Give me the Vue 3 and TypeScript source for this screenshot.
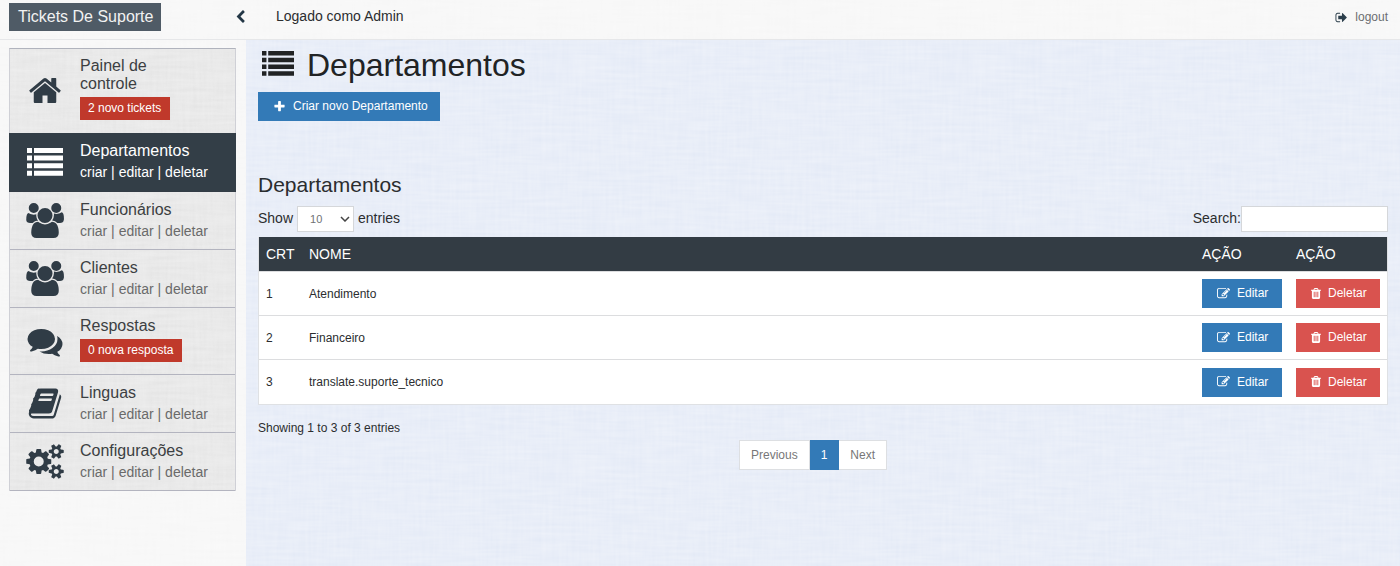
<script setup lang="ts">
import { ref } from 'vue'

interface Icon {
  viewBox: string
  path: string
}

interface MenuItem {
  title: string
  icon: string
  badge?: string
  active?: boolean
}

interface Department {
  id: number
  name: string
}

const icons: Record<string, Icon> = {
  home: {
    viewBox: '0 0 1792 1792',
    path: 'M1472 992v480q0 26-19 45t-45 19h-384v-384h-256v384h-384q-26 0-45-19t-19-45v-480q0-1 .5-3t.5-3l575-474 575 474q1 2 1 6zm223-69l-62 74q-8 9-21 11h-3q-13 0-21-7l-692-577-692 577q-12 8-24 7-13-2-21-11l-62-74q-8-10-7-23.5t11-21.5l719-599q32-26 76-26t76 26l244 204v-195q0-14 9-23t23-9h192q14 0 23 9t9 23v408l219 182q10 8 11 21.5t-7 23.5z',
  },
  list: {
    viewBox: '0 0 36 28',
    path: 'M0 0h5v5H0zM7 0h29v5H7zM0 7.6h5v5H0zM7 7.6h29v5H7zM0 15.2h5v5H0zM7 15.2h29v5H7zM0 22.8h5v5H0zM7 22.8h29v5H7z',
  },
  users: {
    viewBox: '0 0 1920 1792',
    path: 'M593 896q-162 5-265 128h-134q-82 0-138-40.5t-56-118.5q0-353 124-353 6 0 43.5 21t97.5 42.5 119 21.5q67 0 133-23-5 37-5 66 0 159 93 290zm1071 637q0 120-73 189.5t-194 69.5h-874q-121 0-194-69.5t-73-189.5q0-53 3.5-103.5t14-109 26.5-108.5 43-97.5 62-81 85.5-53.5 111.5-20q10 0 43 21.5t73 48 107 48 135 21.5 135-21.5 107-48 73-48 43-21.5q61 0 111.5 20t85.5 53.5 62 81 43 97.5 26.5 108.5 14 109 3.5 103.5zm-1024-1277q0 106-75 181t-181 75-181-75-75-181 75-181 181-75 181 75 75 181zm704 384q0 159-112.5 271.5t-271.5 112.5-271.5-112.5-112.5-271.5 112.5-271.5 271.5-112.5 271.5 112.5 112.5 271.5zm576 225q0 78-56 118.5t-138 40.5h-134q-103-123-265-128 93-131 93-290 0-29-5-66 66 23 133 23 59 0 119-21.5t97.5-42.5 43.5-21q124 0 124 353zm-128-609q0 106-75 181t-181 75-181-75-75-181 75-181 181-75 181 75 75 181z',
  },
  comments: {
    viewBox: '0 0 1792 1792',
    path: 'M1408 768q0 139-94 257t-256.5 186.5-353.5 68.5q-86 0-176-16-124 88-278 128-36 9-86 16h-3q-11 0-20.5-8t-11.5-21q-1-3-1-6.5t.5-6.5 2-6l2.5-5 3.5-5.5 4-5 4.5-5 4-4.5q5-6 23-25t26-29.5 22.5-29 25-38.5 20.5-44q-124-72-195-177t-71-224q0-139 94-257t256.5-186.5 353.5-68.5 353.5 68.5 256.5 186.5 94 257zm384 256q0 120-71 224.5t-195 176.5q10 24 20.5 44t25 38.5 22.5 29 26 29.5 23 25q1 1 4 4.5t4.5 5 4 5 3.5 5.5l2.5 5 2 6 .5 6.5-1 6.5q-3 14-13 22t-22 7q-50-7-86-16-154-40-278-128-90 16-176 16-271 0-472-132 58 4 88 4 161 0 309-45t264-129q125-92 192-212t67-254q0-77-23-152 129 71 204 178t75 230z',
  },
  book: {
    viewBox: '0 0 1792 1792',
    path: 'M1703 478q40 57 18 129l-275 906q-19 64-76.5 107.5t-122.5 43.5h-923q-77 0-148.5-53.5t-99.5-131.5q-24-67-2-127 0-4 3-27t4-37q1-8-3-21.5t-3-19.5q2-11 8-21t16.5-23.5 16.5-23.5q23-38 45-91.5t30-91.5q3-10 .5-30t-.5-28q3-11 17-28t17-23q21-36 42-92t25-90q1-9-2.5-32t.5-28q4-13 22-30.5t22-22.5q19-26 42.5-84.5t27.5-96.5q1-8-3-25.5t-2-26.5q2-8 9-18t18-23 17-21q8-12 16.5-30.5t15-35 16-36 19.5-32 26.5-23.5 36-11.5 47.5 5.5l-1 3q38-9 51-9h761q74 0 114 56t18 130l-274 906q-36 119-71.5 153.5t-128.5 34.5h-869q-27 0-38 15-11 16-1 43 24 70 144 70h923q29 0 56-15.5t35-41.5l300-987q7-22 5-57 38 15 59 43zm-1064 2q-4 13 2 22.5t20 9.5h608q13 0 25.5-9.5t16.5-22.5l21-64q4-13-2-22.5t-20-9.5h-608q-13 0-25.5 9.5t-16.5 22.5zm-83 256q-4 13 2 22.5t20 9.5h608q13 0 25.5-9.5t16.5-22.5l21-64q4-13-2-22.5t-20-9.5h-608q-13 0-25.5 9.5t-16.5 22.5z',
  },
  cogs: {
    viewBox: '0 0 1920 1792',
    path: 'M896 896q0-106-75-181t-181-75-181 75-75 181 75 181 181 75 181-75 75-181zm768 512q0-52-38-90t-90-38-90 38-38 90q0 53 37.5 90.5t90.5 37.5 90.5-37.5 37.5-90.5zm0-1024q0-52-38-90t-90-38-90 38-38 90q0 53 37.5 90.5t90.5 37.5 90.5-37.5 37.5-90.5zm-384 421v185q0 10-7 19.5t-16 10.5l-155 24q-11 35-32 76 34 48 90 115 7 11 7 20 0 12-7 19-23 30-82.5 89.5t-78.5 59.5q-11 0-21-7l-115-90q-37 19-77 31-11 108-23 155-7 24-30 24h-186q-11 0-20-7.5t-10-17.5l-23-153q-34-10-75-31l-118 89q-7 7-20 7-11 0-21-8-144-133-144-160 0-9 7-19 10-14 41-53t47-61q-23-44-35-82l-152-24q-10-1-17-9.5t-7-19.5v-185q0-10 7-19.5t16-10.5l155-24q11-35 32-76-34-48-90-115-7-11-7-20 0-12 7-20 22-30 82-89t79-59q11 0 21 7l115 90q34-18 77-32 11-108 23-154 7-24 30-24h186q11 0 20 7.5t10 17.5l23 153q34 10 75 31l118-89q8-7 20-7 11 0 21 8 144 133 144 160 0 8-7 19-12 16-42 54t-45 60q23 48 34 82l152 23q10 2 17 10.5t7 19.5zm640 533v140q0 16-149 31-12 27-30 52 51 113 51 138 0 4-4 7-122 71-124 71-8 0-46-47t-52-68q-20 2-30 2t-30-2q-14 21-52 68t-46 47q-2 0-124-71-4-3-4-7 0-25 51-138-18-25-30-52-149-15-149-31v-140q0-16 149-31 13-29 30-52-51-113-51-138 0-4 4-7 4-2 35-20t59-34 30-16q8 0 46 46.5t52 67.5q20-2 30-2t30 2q51-71 92-112l6-2q4 0 124 70 4 3 4 7 0 25-51 138 17 23 30 52 149 15 149 31zm0-1024v140q0 16-149 31-12 27-30 52 51 113 51 138 0 4-4 7-122 71-124 71-8 0-46-47t-52-68q-20 2-30 2t-30-2q-14 21-52 68t-46 47q-2 0-124-71-4-3-4-7 0-25 51-138-18-25-30-52-149-15-149-31v-140q0-16 149-31 13-29 30-52-51-113-51-138 0-4 4-7 4-2 35-20t59-34 30-16q8 0 46 46.5t52 67.5q20-2 30-2t30 2q51-71 92-112l6-2q4 0 124 70 4 3 4 7 0 25-51 138 17 23 30 52 149 15 149 31z',
  },
}

const menu: MenuItem[] = [
  { title: 'Painel de controle', icon: 'home', badge: '2 novo tickets' },
  { title: 'Departamentos', icon: 'list', active: true },
  { title: 'Funcionários', icon: 'users' },
  { title: 'Clientes', icon: 'users' },
  { title: 'Respostas', icon: 'comments', badge: '0 nova resposta' },
  { title: 'Linguas', icon: 'book' },
  { title: 'Configurações', icon: 'cogs' },
]

const departments: Department[] = [
  { id: 1, name: 'Atendimento' },
  { id: 2, name: 'Financeiro' },
  { id: 3, name: 'translate.suporte_tecnico' },
]

const pageSize = ref('10')
const search = ref('')
</script>

<template>
  <div class="page">
    <header class="topbar">
      <div class="brand-area">
        <a class="brand" href="#">Tickets De Suporte</a>
        <button class="collapse" type="button" aria-label="Recolher menu">
          <svg viewBox="340 0 1120 1664" aria-hidden="true">
            <path d="M1427 301l-531 531 531 531q19 19 19 45t-19 45l-166 166q-19 19-45 19t-45-19l-742-742q-19-19-19-45t19-45l742-742q19-19 45-19t45 19l166 166q19 19 19 45t-19 45z" />
          </svg>
        </button>
      </div>
      <span class="logged">Logado como Admin</span>
      <a class="logout" href="#">
        <svg viewBox="0 0 1792 1792" aria-hidden="true">
          <path d="M704 1440q0 4 1 20t.5 26.5-3 23.5-10 19.5-20.5 6.5h-320q-119 0-203.5-84.5t-84.5-203.5v-704q0-119 84.5-203.5t203.5-84.5h320q13 0 22.5 9.5t9.5 22.5q0 4 1 20t.5 26.5-3 23.5-10 19.5-20.5 6.5h-320q-66 0-113 47t-47 113v704q0 66 47 113t113 47h312l11.5 1 11.5 3 8 5.5 7 9 2 13.5zm928-544q0 26-19 45l-544 544q-19 19-45 19t-45-19-19-45v-288h-448q-26 0-45-19t-19-45v-384q0-26 19-45t45-19h448v-288q0-26 19-45t45-19 45 19l544 544q19 19 19 45z" />
        </svg>
        logout
      </a>
    </header>

    <div class="body">
      <nav class="sidebar">
        <ul class="menu">
          <li v-for="item in menu" :key="item.title" class="item" :class="{ active: item.active, first: item.icon === 'home' }">
            <svg class="item-icon" :class="'icon-' + item.icon" :viewBox="icons[item.icon].viewBox" aria-hidden="true">
              <path :d="icons[item.icon].path" />
            </svg>
            <div class="item-text">
              <a class="item-title" href="#">{{ item.title }}</a>
              <a v-if="item.badge" class="badge" href="#">{{ item.badge }}</a>
              <span v-else class="links"><a href="#">criar</a> | <a href="#">editar</a> | <a href="#">deletar</a></span>
            </div>
          </li>
        </ul>
      </nav>

      <main class="content">
        <h1>
          <svg viewBox="0 0 36 28" aria-hidden="true"><path :d="icons.list.path" /></svg>
          Departamentos
        </h1>
        <button class="btn primary create" type="button">
          <svg viewBox="0 0 1792 1792" aria-hidden="true">
            <path d="M1600 736v192q0 40-28 68t-68 28h-416v416q0 40-28 68t-68 28h-192q-40 0-68-28t-28-68v-416h-416q-40 0-68-28t-28-68v-192q0-40 28-68t68-28h416v-416q0-40 28-68t68-28h192q40 0 68 28t28 68v416h416q40 0 68 28t28 68z" />
          </svg>
          Criar novo Departamento
        </button>

        <h2>Departamentos</h2>
        <div class="controls">
          <div class="length">
            <label for="page-size">Show</label>
            <span class="select-wrap">
              <select id="page-size" v-model="pageSize">
                <option>10</option>
                <option>25</option>
                <option>50</option>
                <option>100</option>
              </select>
              <svg viewBox="0 0 10 6" aria-hidden="true"><path d="M1 1l4 4 4-4" /></svg>
            </span>
            <span>entries</span>
          </div>
          <div class="filter">
            <label for="search">Search:</label>
            <input id="search" v-model="search" type="search" />
          </div>
        </div>

        <table>
          <thead>
            <tr>
              <th class="col-id">CRT</th>
              <th>NOME</th>
              <th class="col-edit">AÇÃO</th>
              <th class="col-delete">AÇÃO</th>
            </tr>
          </thead>
          <tbody>
            <tr v-for="d in departments" :key="d.id">
              <td>{{ d.id }}</td>
              <td>{{ d.name }}</td>
              <td>
                <button class="btn primary" type="button">
                  <svg viewBox="0 0 1792 1792" aria-hidden="true">
                    <path d="M888 1184l116-116-152-152-116 116v56h96v96h56zm440-720q-16-16-33 1l-350 350q-17 17-1 33t33-1l350-350q17-17 1-33zm80 594v190q0 119-84.5 203.5t-203.5 84.5h-832q-119 0-203.5-84.5t-84.5-203.5v-832q0-119 84.5-203.5t203.5-84.5h832q63 0 117 25 15 7 18 23 3 17-9 29l-49 49q-14 14-32 8-23-6-45-6h-832q-66 0-113 47t-47 113v832q0 66 47 113t113 47h832q66 0 113-47t47-113v-126q0-13 9-22l64-64q15-15 35-7t20 29zm-96-738l288 288-672 672h-288v-288zm444 132l-92 92-288-288 92-92q28-28 68-28t68 28l152 152q28 28 28 68t-28 68z" />
                  </svg>
                  Editar
                </button>
              </td>
              <td>
                <button class="btn danger" type="button">
                  <svg viewBox="192 0 1408 1792" aria-hidden="true">
                    <path d="M704 1376v-704q0-14-9-23t-23-9h-64q-14 0-23 9t-9 23v704q0 14 9 23t23 9h64q14 0 23-9t9-23zm256 0v-704q0-14-9-23t-23-9h-64q-14 0-23 9t-9 23v704q0 14 9 23t23 9h64q14 0 23-9t9-23zm256 0v-704q0-14-9-23t-23-9h-64q-14 0-23 9t-9 23v704q0 14 9 23t23 9h64q14 0 23-9t9-23zm-544-992h448l-48-117q-7-9-17-11h-317q-10 2-17 11zm928 32v64q0 14-9 23t-23 9h-96v948q0 83-47 143.5t-113 60.5h-832q-66 0-113-58.5t-47-141.5v-952h-96q-14 0-23-9t-9-23v-64q0-14 9-23t23-9h309l70-167q15-37 54-63t79-26h320q40 0 79 26t54 63l70 167h309q14 0 23 9t9 23z" />
                  </svg>
                  Deletar
                </button>
              </td>
            </tr>
          </tbody>
        </table>

        <p class="info">Showing 1 to 3 of 3 entries</p>
        <nav class="pagination" aria-label="Paginação">
          <button type="button">Previous</button>
          <button class="current" type="button" aria-current="page">1</button>
          <button type="button">Next</button>
        </nav>
      </main>
    </div>
  </div>
</template>

<style>
body {
  margin: 0;
}
</style>

<style scoped>
* {
  box-sizing: border-box;
}

/* Woven linen texture shared by every surface */
.page {
  --linen: url("data:image/svg+xml,%3Csvg xmlns='http://www.w3.org/2000/svg' width='400' height='400'%3E%3Cfilter id='h' x='0' y='0' width='100%25' height='100%25'%3E%3CfeTurbulence type='fractalNoise' baseFrequency='.025 .3' numOctaves='2' seed='3' stitchTiles='stitch'/%3E%3CfeColorMatrix values='0 0 0 0 1 0 0 0 0 1 0 0 0 0 1 .35 0 0 0 0'/%3E%3C/filter%3E%3Cfilter id='v' x='0' y='0' width='100%25' height='100%25'%3E%3CfeTurbulence type='fractalNoise' baseFrequency='.3 .025' numOctaves='2' seed='8' stitchTiles='stitch'/%3E%3CfeColorMatrix values='0 0 0 0 1 0 0 0 0 1 0 0 0 0 1 .35 0 0 0 0'/%3E%3C/filter%3E%3Crect width='400' height='400' filter='url(%23h)'/%3E%3Crect width='400' height='400' filter='url(%23v)' opacity='.7'/%3E%3C/svg%3E");
  display: flex;
  flex-direction: column;
  min-height: 100vh;
  background: var(--linen) #f5f5f5;
  color: #2b2d2f;
  font: 12px/18px "Liberation Sans", Arial, sans-serif;
}

a {
  color: inherit;
  text-decoration: none;
}

button,
input,
select {
  font: inherit;
  border-radius: 0;
}

svg {
  fill: currentColor;
  flex: none;
}

.topbar {
  display: flex;
  align-items: flex-start;
  height: 40px;
  border-bottom: 1px solid #e6e7e9;
}

.brand-area {
  display: flex;
  justify-content: space-between;
  width: 246px;
  padding: 3px 0 0 9px;
}

.brand {
  height: 28px;
  padding: 0 8px 0 9px;
  background: #4f5b66;
  color: #f2f2f2;
  font-size: 16px;
  line-height: 28px;
}

.collapse {
  display: flex;
  align-items: center;
  height: 27px;
  padding: 0 1px 0 0;
  border: 0;
  background: none;
  color: #233746;
}

.collapse svg {
  width: 9px;
  height: 13px;
}

.logged {
  padding: 7px 0 0 30px;
  font-size: 14px;
}

.logout {
  display: flex;
  align-items: center;
  gap: 7px;
  margin-left: auto;
  padding: 8px 12px 0 0;
  color: #6b6e71;
}

.logout svg {
  width: 13px;
  height: 13px;
  color: #2b3e4b;
}

.body {
  display: flex;
  flex: 1;
}

.sidebar {
  flex: none;
  width: 246px;
  padding: 8px 10px 0 9px;
}

.menu {
  margin: 0;
  padding: 0;
  list-style: none;
  border: 1px solid #cfd0d6;
  border-top-color: #b0b3bd;
  border-bottom: 0;
}

.item {
  display: flex;
  align-items: center;
  padding: 9px 16px 9px 15px;
  border-bottom: 1px solid #b3b4bf;
  background: var(--linen) #e1e1e1;
  color: #6a6a6a;
}

.item-icon {
  width: 40px;
  height: 35px;
  margin-right: 15px;
  color: #303c46;
}

.item .icon-list {
  height: 28px;
}

.item-text {
  display: flex;
  flex: 1;
  flex-direction: column;
  align-items: flex-start;
}

.item-title {
  color: #3c3f42;
  font-size: 16px;
  line-height: 18px;
}

.first .item-title {
  width: 80px;
}

.links {
  margin-top: 3px;
  font-size: 14px;
}

.first {
  padding: 8px 16px 10px 15px;
}

.badge {
  height: 23px;
  margin: 4px 0 3px;
  padding: 0 9px 0 8px;
  background: #c0392b;
  color: #fff;
  line-height: 22px;
}

.active {
  margin: -1px -1px 0;
  padding: 9px 17px 10px 16px;
  border-bottom-color: #333c45;
  background: #333e47;
  color: #fff;
}

.active .item-icon,
.active .item-title {
  color: #fff;
}

.content {
  flex: 1;
  min-width: 0;
  padding: 8px 12px 0;
  background: var(--linen) #e0e7f5;
}

h1 {
  display: flex;
  align-items: center;
  gap: 13px;
  margin: 0 0 9px;
  padding-left: 4px;
  color: #212325;
  font-size: 32px;
  font-weight: 400;
  line-height: 35px;
}

h1 svg {
  width: 32px;
  height: 25px;
  margin-bottom: 4px;
}

.btn {
  display: flex;
  align-items: center;
  gap: 7px;
  height: 29px;
  padding: 0 12px 1px 15px;
  border: 0;
  background: #337ab7;
  color: #fff;
  white-space: nowrap;
}

.btn svg {
  width: 13px;
  height: 13px;
}

td .btn {
  width: 100%;
}

.danger {
  background: #d9534f;
}

.danger svg {
  width: 10px;
}

h2 {
  margin: 51px 0 9px;
  font-size: 21px;
  font-weight: 400;
  line-height: 25px;
}

.controls {
  display: flex;
  justify-content: space-between;
  margin-bottom: 5px;
  font-size: 14px;
}

.length,
.filter {
  display: flex;
  line-height: 24px;
}

.length {
  gap: 4px;
}

.select-wrap {
  position: relative;
}

select {
  display: block;
  width: 57px;
  height: 26px;
  padding: 0 12px;
  border: 1px solid #d5d7da;
  appearance: none;
  background: #fff;
  color: #707274;
  font-size: 11px;
}

.select-wrap svg {
  position: absolute;
  top: 10px;
  right: 4px;
  width: 10px;
  height: 6px;
  fill: none;
  stroke: #444;
  stroke-width: 1.5;
  pointer-events: none;
}

input {
  width: 147px;
  height: 26px;
  padding: 0 8px;
  border: 1px solid #d5d7da;
  background: #fff;
}

table {
  width: 100%;
  border-collapse: separate;
  border-spacing: 0;
  background: #fff;
  border: 1px solid #dfe1e4;
  border-top: 0;
}

thead {
  background: #333c44;
  color: #fff;
}

th {
  height: 35px;
  padding: 0 7px;
  border-bottom: 1px solid #dcdddf;
  font-size: 14px;
  font-weight: 400;
  text-align: left;
}

td {
  height: 44px;
  padding: 0 7px;
  border-bottom: 1px solid #dcdddf;
}

tbody tr:last-child td {
  border-bottom: 0;
}

.col-id {
  width: 43px;
}

.col-edit {
  width: 94px;
}

.col-delete {
  width: 98px;
}

.info {
  margin: 14px 0 3px;
}

.pagination {
  display: flex;
  justify-content: center;
  padding-right: 20px;
}

.pagination button {
  height: 30px;
  padding: 0 11px;
  border: 1px solid #dddfe2;
  background: #fff;
  color: #777;
}

.pagination button + button {
  border-left: 0;
}

.pagination .current {
  border-color: #337ab7;
  background: #337ab7;
  color: #fff;
}
</style>
